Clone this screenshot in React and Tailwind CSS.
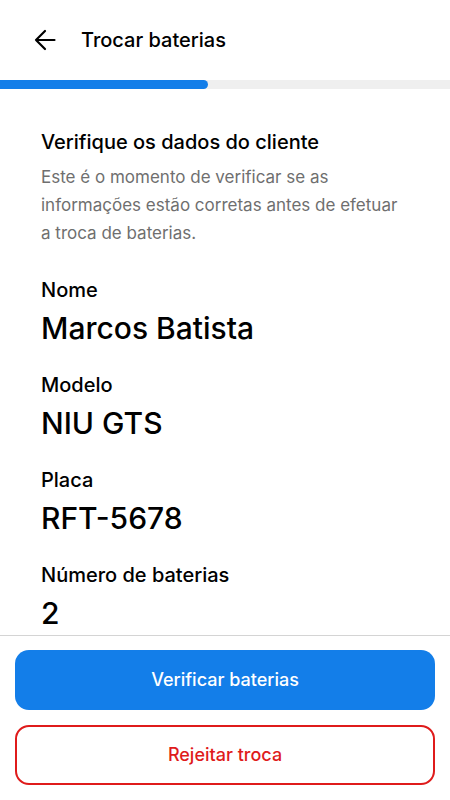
const fields = [
  { label: "Nome", value: "Marcos Batista" },
  { label: "Modelo", value: "NIU GTS" },
  { label: "Placa", value: "RFT-5678" },
  { label: "Número de baterias", value: "2" },
];

export default function App() {
  return (
    <div className="h-[800px] w-full flex flex-col bg-white text-black font-['Inter','Noto_Sans',sans-serif]">
      {/* Header */}
      <div className="h-20 flex items-center pl-[34px] gap-[25px] shrink-0">
        <svg width="22" height="22" viewBox="0 0 22 22" fill="none" stroke="currentColor" strokeWidth="2.2" strokeLinecap="round" strokeLinejoin="round">
          <path d="M20.5 11H2M11 2l-9 9 9 9" />
        </svg>
        <h1 className="text-xl font-medium">Trocar baterias</h1>
      </div>

      {/* Progress */}
      <div className="h-[9px] bg-[#efefef] shrink-0">
        <div className="h-full w-[208px] bg-[#137ee9] rounded-r-full" />
      </div>

      {/* Content */}
      <div className="flex-1 overflow-hidden pl-[41px] pr-[44px] pt-[41px]">
        <h2 className="text-xl font-medium leading-6">Verifique os dados do cliente</h2>
        <p className="mt-[9px] text-[17px] leading-7 text-[#6f6f6f]">
          Este é o momento de verificar se as informações estão corretas antes de efetuar a troca de baterias.
        </p>

        <div className="mt-[31px] flex flex-col gap-[25px]">
          {fields.map((f) => (
            <div key={f.label} className="flex flex-col">
              <span className="text-xl font-medium leading-6">{f.label}</span>
              <span className="mt-[6px] text-[30px] font-medium leading-10">{f.value}</span>
            </div>
          ))}
        </div>
      </div>

      {/* Footer actions */}
      <div className="shrink-0 border-t border-[#d4d4d4] px-[15px] pt-[14px] pb-[15px] flex flex-col gap-[15px]">
        <button className="h-[60px] w-full rounded-[14px] bg-[#137ee9] text-white text-lg font-medium">
          Verificar baterias
        </button>
        <button className="h-[60px] w-full rounded-[14px] border-2 border-[#df1b1b] text-[#df1b1b] text-lg font-medium">
          Rejeitar troca
        </button>
      </div>
    </div>
  );
}
